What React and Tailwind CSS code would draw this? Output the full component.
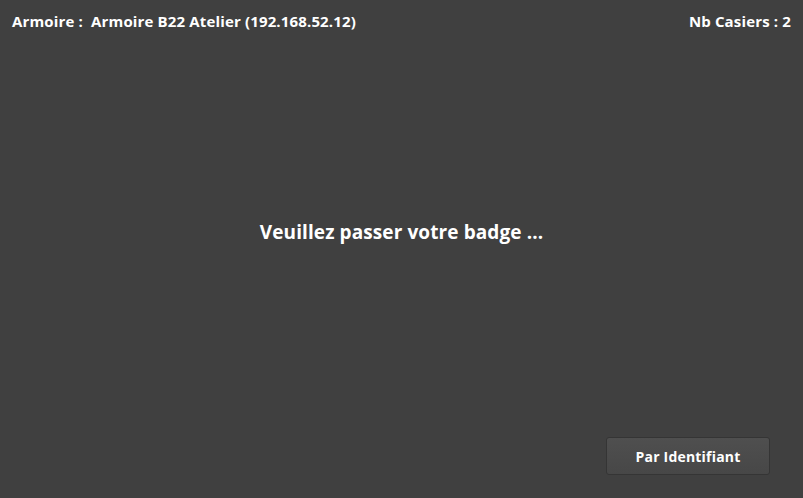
export default function App() {
  return (
    <div
      className="w-[803px] h-[498px] bg-[#404040] text-white flex flex-col"
      style={{ fontFamily: '"Open Sans", "DejaVu Sans", sans-serif' }}
    >
      <div className="flex justify-between items-center px-[12px] pt-[10px] text-[15px] font-bold leading-[22px] tracking-[0.15px]">
        <span>Armoire :&nbsp; Armoire B22 Atelier (192.168.52.12)</span>
        <span>Nb Casiers : 2</span>
      </div>
      <div className="flex-1 flex items-center justify-center">
        <span className="text-[19px] font-bold mb-[4px] tracking-[0.1px]">Veuillez passer votre badge ...</span>
      </div>
      <div className="flex justify-end pr-[33px] pb-[23px]">
        <button className="w-[164px] h-[38px] rounded-[3px] border border-[#353535] bg-gradient-to-b from-[#4f4f4f] to-[#474747] text-[14px] font-bold text-white tracking-[0.2px]">
          Par Identifiant
        </button>
      </div>
    </div>
  );
}
